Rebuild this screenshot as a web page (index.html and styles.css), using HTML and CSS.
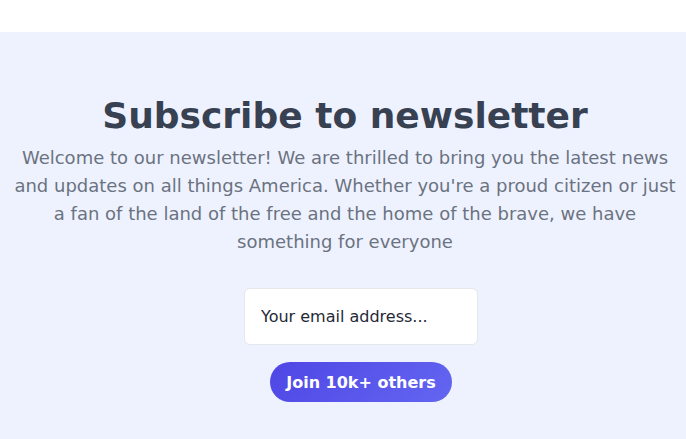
FILE: index.html
```html
<!DOCTYPE html>
<html>
<head>
<meta charset="utf-8">
<link rel="stylesheet" href="styles.css">
</head>
<body>
<div class="topbar"></div>
<section class="newsletter">
  <h1 class="title">Subscribe to newsletter</h1>
  <p class="lead">Welcome to our newsletter! We are thrilled to bring you the latest news and updates on all things America. Whether you're a proud citizen or just a fan of the land of the free and the home of the brave, we have something for everyone</p>
  <form class="form">
    <input class="email" type="email" placeholder="Your email address...">
    <button class="join" type="button">Join 10k+ others</button>
  </form>
</section>
</body>
</html>
```
FILE: styles.css
```css
html, body {
  margin: 0;
  padding: 0;
  font-family: "DejaVu Sans", sans-serif;
  background: #eef2ff;
}
.topbar {
  height: 32px;
  background: #ffffff;
}
.newsletter {
  background: #eef2ff;
  padding: 64px 6px 40px 10px;
  text-align: center;
  min-height: 343px;
  box-sizing: border-box;
}
.title {
  margin: 0;
  font-size: 36px;
  line-height: 40px;
  font-weight: 700;
  color: #374151;
}
.lead {
  margin: 8px 0 0;
  font-size: 18px;
  line-height: 28px;
  color: #6b7280;
}
.form {
  margin: 32px 0 0;
  padding-left: 32px;
  display: flex;
  flex-direction: column;
  align-items: center;
  gap: 17px;
}
.email {
  width: 234px;
  height: 57px;
  box-sizing: border-box;
  padding: 0 16px;
  border: 1px solid #e5e7eb;
  border-radius: 6px;
  background: #ffffff;
  font-family: "DejaVu Sans", sans-serif;
  font-size: 16px;
  color: #1f2937;
  outline: none;
}
.email::placeholder {
  color: #1f2937;
  opacity: 1;
}
.join {
  width: 182px;
  height: 40px;
  border: none;
  border-radius: 20px;
  background: linear-gradient(135deg, #4f46e5, #6366f1);
  color: #ffffff;
  font-family: "DejaVu Sans", sans-serif;
  font-size: 16px;
  font-weight: 700;
  padding: 0 16px;
  cursor: pointer;
}
```
